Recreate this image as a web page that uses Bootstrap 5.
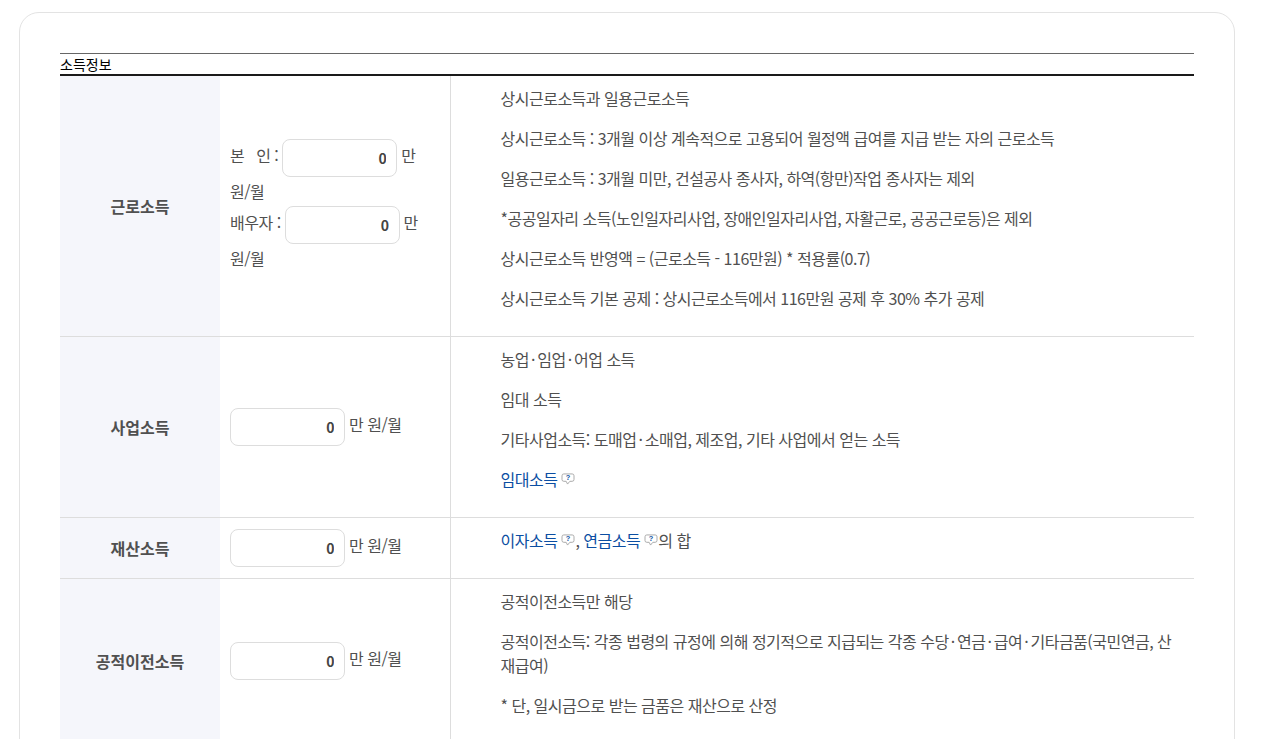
<!DOCTYPE html>
<html lang="ko">
<head>
<meta charset="UTF-8">
<meta name="viewport" content="width=device-width, initial-scale=1">
<link href="https://cdn.jsdelivr.net/npm/bootstrap@5.3.1/dist/css/bootstrap.min.css" rel="stylesheet">
<style>
html, body { height: 739px; overflow: hidden; }
body {
    font-family: "Noto Sans CJK KR", "Noto Sans", sans-serif;
    font-size: 16px;
    line-height: 24px;
    color: #505050;
    letter-spacing: -0.5px;
}
.income-card {
    margin: 12px 0 0 19px;
    width: 1216px;
    padding: 40px;
    border: 1px solid #e3e3e3;
    border-radius: 20px;
}
.income-table { table-layout: fixed; width: 1134px; margin: 0; }
.income-table caption {
    caption-side: top;
    padding: 0;
    height: 23px;
    line-height: 21px;
    font-size: 14px;
    color: #000;
    border-top: 1px solid #666;
    border-bottom: 2px solid #1a1a1a;
    letter-spacing: 0;
}
.income-table th, .income-table td {
    padding: 10px;
    border-bottom: 1px solid #ddd;
    color: #505050;
    box-shadow: none;
}
.income-table th {
    width: 160px;
    background: #f5f6fb;
    text-align: center;
    vertical-align: middle;
    font-weight: 700;
    letter-spacing: 0;
}
.income-table .amount-cell { width: 230px; vertical-align: middle; border-right: 1px solid #ddd; }
.income-table .amount-pair { padding-bottom: 16px; }
.income-table .desc-cell { padding: 10px 20px 10px 50px; }
.amount-label { display: inline-block; padding-right: 4px; }
.amount-input {
    display: inline-block;
    width: 115px;
    height: 38px;
    padding: 0 10px;
    border: 1px solid #ddd;
    border-radius: 8px;
    text-align: right;
    font-size: 14px;
    font-weight: 700;
    letter-spacing: -0.5px;
    color: #444;
    vertical-align: middle;
}
.amount-pair .amount-input { margin: 3px 0 2px; }
.unit-text { white-space: nowrap; }
.help-link { color: #0b4ea2; text-decoration: none; }
.help-icon { width: 14px; height: 12px; vertical-align: 1px; }
.help-icon text { font-family: "Liberation Sans", sans-serif; letter-spacing: 0; }
</style>
</head>
<body>
<div class="income-card">
    <table class="table income-table">
        <caption>소득정보</caption>
        <tbody>
            <tr>
                <th scope="row">근로소득</th>
                <td class="amount-cell amount-pair">
                    <label class="amount-label">본 &nbsp; 인 :</label><input class="form-control amount-input" type="text" value="0"> 만 <span class="unit-text">원/월</span><br>
                    <label class="amount-label">배우자 :</label><input class="form-control amount-input" type="text" value="0"> 만 <span class="unit-text">원/월</span>
                </td>
                <td class="desc-cell">
                    <p>상시근로소득과 일용근로소득</p>
                    <p>상시근로소득 : 3개월 이상 계속적으로 고용되어 월정액 급여를 지급 받는 자의 근로소득</p>
                    <p>일용근로소득 : 3개월 미만, 건설공사 종사자, 하역(항만)작업 종사자는 제외</p>
                    <p>*공공일자리 소득(노인일자리사업, 장애인일자리사업, 자활근로, 공공근로등)은 제외</p>
                    <p>상시근로소득 반영액 = (근로소득 - 116만원) * 적용률(0.7)</p>
                    <p>상시근로소득 기본 공제 : 상시근로소득에서 116만원 공제 후 30% 추가 공제</p>
                </td>
            </tr>
            <tr>
                <th scope="row">사업소득</th>
                <td class="amount-cell"><input class="form-control amount-input" type="text" value="0"> 만 원/월</td>
                <td class="desc-cell">
                    <p>농업&#8198;·&#8198;임업&#8198;·&#8198;어업 소득</p>
                    <p>임대 소득</p>
                    <p>기타사업소득: 도매업&#8198;·&#8198;소매업, 제조업, 기타 사업에서 얻는 소득</p>
                    <p><a class="help-link" href="#">임대소득</a> <svg class="help-icon" viewBox="0 0 15 13"><path d="M3 1h9a2 2 0 0 1 2 2v4a2 2 0 0 1-2 2h-2.5L7 12 5.5 9H3a2 2 0 0 1-2-2V3a2 2 0 0 1 2-2z" fill="#fff" stroke="#a5a5a5"/><text x="7.5" y="8" font-size="8" font-weight="700" text-anchor="middle" fill="#0b4ea2">?</text></svg></p>
                </td>
            </tr>
            <tr>
                <th scope="row">재산소득</th>
                <td class="amount-cell"><input class="form-control amount-input" type="text" value="0"> 만 원/월</td>
                <td class="desc-cell">
                    <p><a class="help-link" href="#">이자소득</a> <svg class="help-icon" viewBox="0 0 15 13"><path d="M3 1h9a2 2 0 0 1 2 2v4a2 2 0 0 1-2 2h-2.5L7 12 5.5 9H3a2 2 0 0 1-2-2V3a2 2 0 0 1 2-2z" fill="#fff" stroke="#a5a5a5"/><text x="7.5" y="8" font-size="8" font-weight="700" text-anchor="middle" fill="#0b4ea2">?</text></svg>, <a class="help-link" href="#">연금소득</a> <svg class="help-icon" viewBox="0 0 15 13"><path d="M3 1h9a2 2 0 0 1 2 2v4a2 2 0 0 1-2 2h-2.5L7 12 5.5 9H3a2 2 0 0 1-2-2V3a2 2 0 0 1 2-2z" fill="#fff" stroke="#a5a5a5"/><text x="7.5" y="8" font-size="8" font-weight="700" text-anchor="middle" fill="#0b4ea2">?</text></svg>의 합</p>
                </td>
            </tr>
            <tr>
                <th scope="row">공적이전소득</th>
                <td class="amount-cell"><input class="form-control amount-input" type="text" value="0"> 만 원/월</td>
                <td class="desc-cell">
                    <p>공적이전소득만 해당</p>
                    <p>공적이전소득: 각종 법령의 규정에 의해 정기적으로 지급되는 각종 수당&#8198;·&#8198;연금&#8198;·&#8198;급여&#8198;·&#8198;기타금품(국민연금, 산재급여)</p>
                    <p>* 단, 일시금으로 받는 금품은 재산으로 산정</p>
                </td>
            </tr>
        </tbody>
    </table>
</div>
<script src="https://cdn.jsdelivr.net/npm/bootstrap@5.3.1/dist/js/bootstrap.bundle.min.js"></script>
</body>
</html>
